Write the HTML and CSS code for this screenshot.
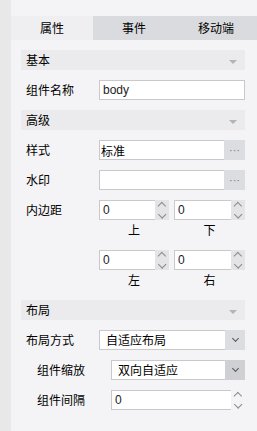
FILE: index.html
```html
<!DOCTYPE html>
<html lang="zh-CN">
  <head>
    <meta charset="UTF-8" />
    <title>属性面板</title>
    <link rel="stylesheet" href="styles.css">
  </head>
  <body>
    <div class="panel">
      <div class="tabs">
        <div class="tab active">属性</div>
        <div class="tab">事件</div>
        <div class="tab">移动端</div>
      </div>

      <div class="content">
        <div class="section-head">基本<span class="caret"></span></div>
        <div class="row">
          <label>组件名称</label>
          <div class="field"><input type="text" value="body" /></div>
        </div>

        <div class="section-head">高级<span class="caret"></span></div>
        <div class="row">
          <label>样式</label>
          <div class="field with-btn">
            <input type="text" value="标准" class="cn" />
            <button class="more">···</button>
          </div>
        </div>
        <div class="row">
          <label>水印</label>
          <div class="field with-btn">
            <input type="text" value="" />
            <button class="more">···</button>
          </div>
        </div>
        <div class="row pad-row">
          <label>内边距</label>
          <div class="pad-grid">
            <div class="spin-cell">
              <div class="field spin"><input type="text" value="0" /><span class="spin-btn"><i class="up"></i><i class="down"></i></span></div>
              <div class="sub">上</div>
            </div>
            <div class="spin-cell">
              <div class="field spin"><input type="text" value="0" /><span class="spin-btn"><i class="up"></i><i class="down"></i></span></div>
              <div class="sub">下</div>
            </div>
            <div class="spin-cell">
              <div class="field spin"><input type="text" value="0" /><span class="spin-btn"><i class="up"></i><i class="down"></i></span></div>
              <div class="sub">左</div>
            </div>
            <div class="spin-cell">
              <div class="field spin"><input type="text" value="0" /><span class="spin-btn"><i class="up"></i><i class="down"></i></span></div>
              <div class="sub">右</div>
            </div>
          </div>
        </div>

        <div class="section-head">布局<span class="caret"></span></div>
        <div class="row">
          <label>布局方式</label>
          <div class="field select">
            <span class="value">自适应布局</span>
            <span class="drop"><i></i></span>
          </div>
        </div>
        <div class="row indent">
          <label>组件缩放</label>
          <div class="field select">
            <span class="value">双向自适应</span>
            <span class="drop dark"><i></i></span>
          </div>
        </div>
        <div class="row indent">
          <label>组件间隔</label>
          <div class="field spin">
            <input type="text" value="0" />
            <span class="spin-btn light"><i class="up"></i><i class="down"></i></span>
          </div>
        </div>
      </div>
    </div>
  </body>
</html>
```

FILE: styles.css
```css
:root {
  --strip: #e8e8e8;
  --panel: #f4f4f6;
  --head: #ebebed;
  --tab-off: #dadbde;
  --border: #c9c9cb;
  --btn: #dcdde0;
  --text: #000;
}
body {
  margin: 0;
  background: var(--strip);
  font-family: "Noto Sans CJK SC", "Liberation Sans", sans-serif;
  font-size: 12px;
  color: var(--text);
}
.panel {
  margin-left: 11px;
  height: 431px;
  box-sizing: border-box;
  padding-top: 16px;
  background: var(--panel);
}
.tabs {
  display: grid;
  grid-template-columns: 82px 82px 1fr;
  height: 24px;
}
.tab {
  display: flex;
  align-items: center;
  justify-content: center;
  background: var(--tab-off);
  line-height: 1;
}
.tab.active {
  background: #efeff1;
}
.content {
  padding: 10px 12px 0 10px;
  display: flex;
  flex-direction: column;
  gap: 10px;
}
.section-head {
  height: 20px;
  background: var(--head);
  padding: 0 8px 0 5px;
  display: flex;
  align-items: center;
  justify-content: space-between;
  line-height: 1;
}
.caret {
  width: 0;
  height: 0;
  border-left: 4px solid transparent;
  border-right: 4px solid transparent;
  border-top: 4px solid #b4b4b6;
  margin-top: 3px;
}
.row {
  display: flex;
  align-items: flex-start;
}
.row > label {
  width: 73px;
  flex: none;
  padding-left: 5px;
  height: 20px;
  line-height: 20px;
}
.row.indent {
  padding-left: 11px;
}
.row.indent > label {
  width: 74px;
}
.field {
  flex: 1;
  min-width: 0;
  height: 20px;
  box-sizing: border-box;
  display: flex;
  background: #fff;
  border: 1px solid var(--border);
}
.field.with-btn,
.field.select {
  border-right: none;
}
.field input {
  flex: 1;
  width: 0;
  min-width: 0;
  border: none;
  outline: none;
  padding: 0 0 0 3px;
  height: 18px;
  font-family: "Liberation Sans", "Noto Sans CJK SC", sans-serif;
  font-size: 12px;
  color: #222;
  background: transparent;
}
.field input.cn {
  padding-left: 1px;
  font-family: "Noto Sans CJK SC", sans-serif;
  color: #000;
}
.field .more {
  flex: none;
  width: 21px;
  height: 20px;
  margin: -1px 0 -1px 0;
  border: none;
  padding: 0;
  background: var(--btn);
  color: #7a7a7c;
  font-family: "Liberation Sans", sans-serif;
  font-size: 11px;
  letter-spacing: 0;
  line-height: 20px;
}
.spin-btn {
  flex: none;
  width: 14px;
  margin: -1px -1px -1px 0;
  background: #e4e4e6;
  display: flex;
  flex-direction: column;
  align-items: center;
  justify-content: center;
  gap: 3px;
}
.spin-btn.light {
  background: var(--panel);
}
.spin-btn i {
  width: 5px;
  height: 5px;
  border-left: 1px solid #8a8a8c;
  border-top: 1px solid #8a8a8c;
  transform: rotate(45deg);
}
.spin-btn i.up {
  margin-top: 3px;
}
.spin-btn i.down {
  transform: rotate(225deg);
  margin-bottom: 3px;
}
.pad-grid {
  flex: 1;
  min-width: 0;
  display: grid;
  grid-template-columns: 70px minmax(0, 1fr);
  column-gap: 5px;
  row-gap: 10px;
}
.spin-cell {
  min-width: 0;
}
.sub {
  height: 20px;
  line-height: 20px;
  text-align: center;
}
.select {
  align-items: center;
}
.select .value {
  flex: 1;
  padding-left: 6px;
  line-height: 1;
}
.select .drop {
  flex: none;
  width: 20px;
  height: 20px;
  margin: -1px 0;
  background: var(--btn);
  display: flex;
  align-items: center;
  justify-content: center;
}
.select .drop.dark {
  background: #cfd0d3;
}
.select .drop i {
  width: 4px;
  height: 4px;
  border-right: 1px solid #555;
  border-bottom: 1px solid #555;
  transform: rotate(45deg);
  margin-top: -3px;
}
```
